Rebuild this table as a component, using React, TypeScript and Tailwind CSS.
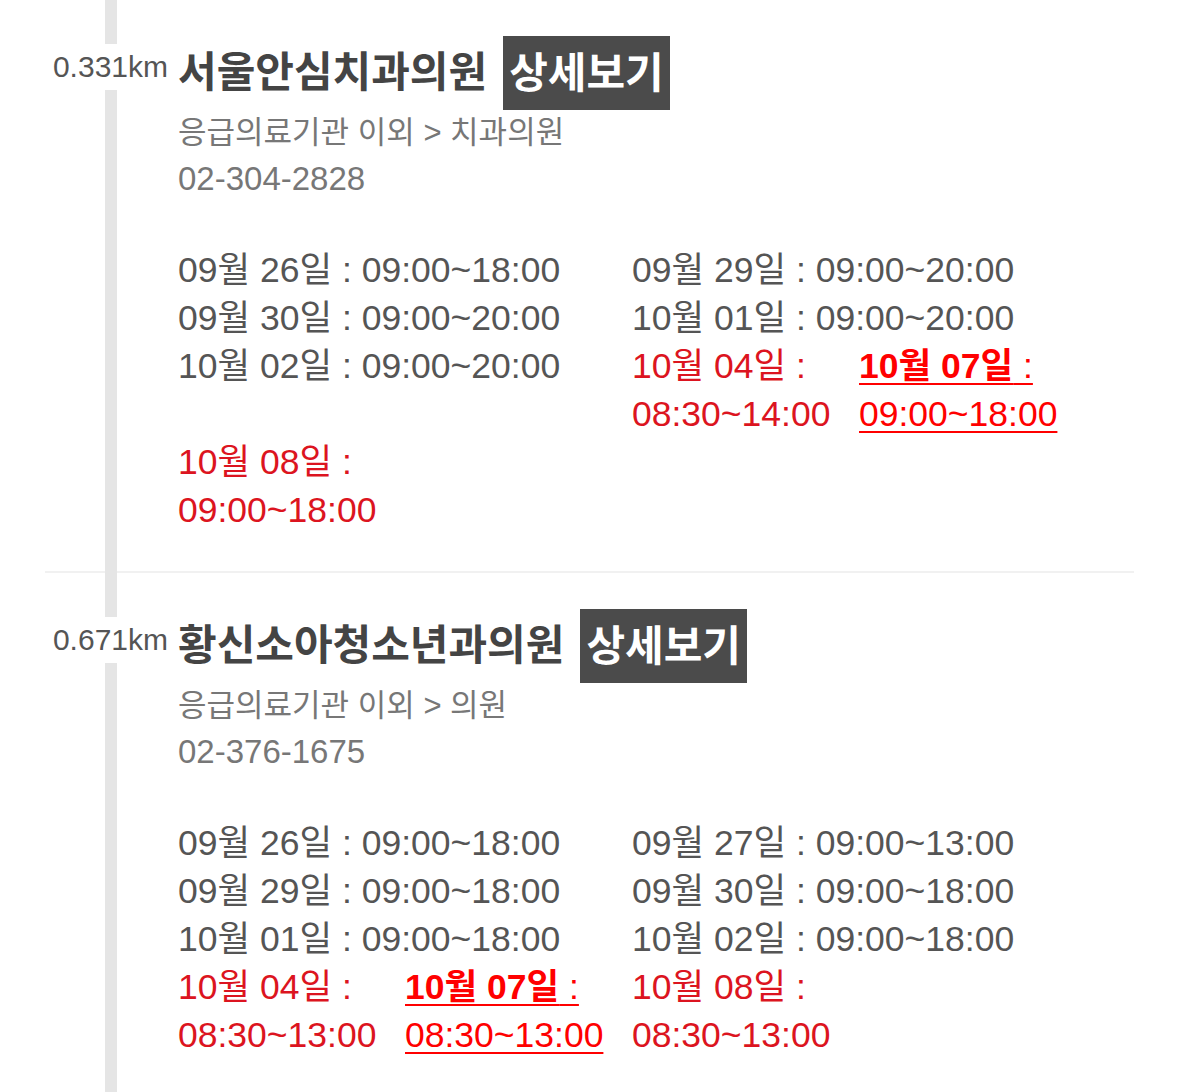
import React from 'react';

interface Slot {
  date: string;
  time: string;
  kind: 'normal' | 'holiday' | 'today';
}

interface Clinic {
  distance: string;
  name: string;
  category: string;
  phone: string;
  slots: Slot[];
}

const clinics: Clinic[] = [
  {
    distance: '0.331km',
    name: '서울안심치과의원',
    category: '응급의료기관 이외 > 치과의원',
    phone: '02-304-2828',
    slots: [
      { date: '09월 26일', time: '09:00~18:00', kind: 'normal' },
      { date: '09월 29일', time: '09:00~20:00', kind: 'normal' },
      { date: '09월 30일', time: '09:00~20:00', kind: 'normal' },
      { date: '10월 01일', time: '09:00~20:00', kind: 'normal' },
      { date: '10월 02일', time: '09:00~20:00', kind: 'normal' },
      { date: '10월 04일', time: '08:30~14:00', kind: 'holiday' },
      { date: '10월 07일', time: '09:00~18:00', kind: 'today' },
      { date: '10월 08일', time: '09:00~18:00', kind: 'holiday' },
    ],
  },
  {
    distance: '0.671km',
    name: '황신소아청소년과의원',
    category: '응급의료기관 이외 > 의원',
    phone: '02-376-1675',
    slots: [
      { date: '09월 26일', time: '09:00~18:00', kind: 'normal' },
      { date: '09월 27일', time: '09:00~13:00', kind: 'normal' },
      { date: '09월 29일', time: '09:00~18:00', kind: 'normal' },
      { date: '09월 30일', time: '09:00~18:00', kind: 'normal' },
      { date: '10월 01일', time: '09:00~18:00', kind: 'normal' },
      { date: '10월 02일', time: '09:00~18:00', kind: 'normal' },
      { date: '10월 04일', time: '08:30~13:00', kind: 'holiday' },
      { date: '10월 07일', time: '08:30~13:00', kind: 'today' },
      { date: '10월 08일', time: '08:30~13:00', kind: 'holiday' },
    ],
  },
];

const SlotItem: React.FC<{ slot: Slot }> = ({ slot }) => {
  if (slot.kind === 'normal') {
    return (
      <li className="w-[454px] whitespace-nowrap text-[#555]">
        {slot.date} : {slot.time}
      </li>
    );
  }
  if (slot.kind === 'today') {
    return (
      <li className="w-[227px] text-[#ff0000] underline decoration-2 underline-offset-[5px]">
        <span className="font-bold">{slot.date}</span> : {slot.time}
      </li>
    );
  }
  return (
    <li className="w-[227px] text-[#dc1420]">
      {slot.date} : {slot.time}
    </li>
  );
};

const ClinicItem: React.FC<{ clinic: Clinic }> = ({ clinic }) => (
  <section className="mx-[45px] border-b-2 border-[#f1f1f1] pt-[36px] pb-[37px]">
    <div className="flex items-start">
      <div className="flex w-[133px] shrink-0 justify-end pr-[10px] pt-[8px]">
        <span className="relative z-10 bg-white text-[30px] leading-[46px] text-[#555]">
          {clinic.distance}
        </span>
      </div>
      <h2 className="text-[42px] font-bold leading-[74px] text-[#444]">{clinic.name}</h2>
      <span className="ml-[16px] flex h-[74px] items-center bg-[#4b4b4b] px-[6px] text-[42px] font-bold text-white">
        상세보기
      </span>
    </div>
    <div className="pl-[133px]">
      <p className="text-[31px] leading-[46px] text-[#777]">{clinic.category}</p>
      <p className="text-[33px] leading-[46px] text-[#777]">{clinic.phone}</p>
      <ul className="mt-[44px] flex flex-wrap text-[35.5px] leading-[48px]">
        {clinic.slots.map((slot) => (
          <SlotItem key={slot.date} slot={slot} />
        ))}
      </ul>
    </div>
  </section>
);

export default function App() {
  return (
    <div
      className="relative min-h-screen overflow-hidden bg-white"
      style={{ fontFamily: '"Liberation Sans", "Noto Sans CJK KR", sans-serif' }}
    >
      <div className="absolute top-0 bottom-0 left-[105px] w-[12px] bg-[#e5e5e5]" />
      {clinics.map((clinic) => (
        <ClinicItem key={clinic.name} clinic={clinic} />
      ))}
    </div>
  );
}
